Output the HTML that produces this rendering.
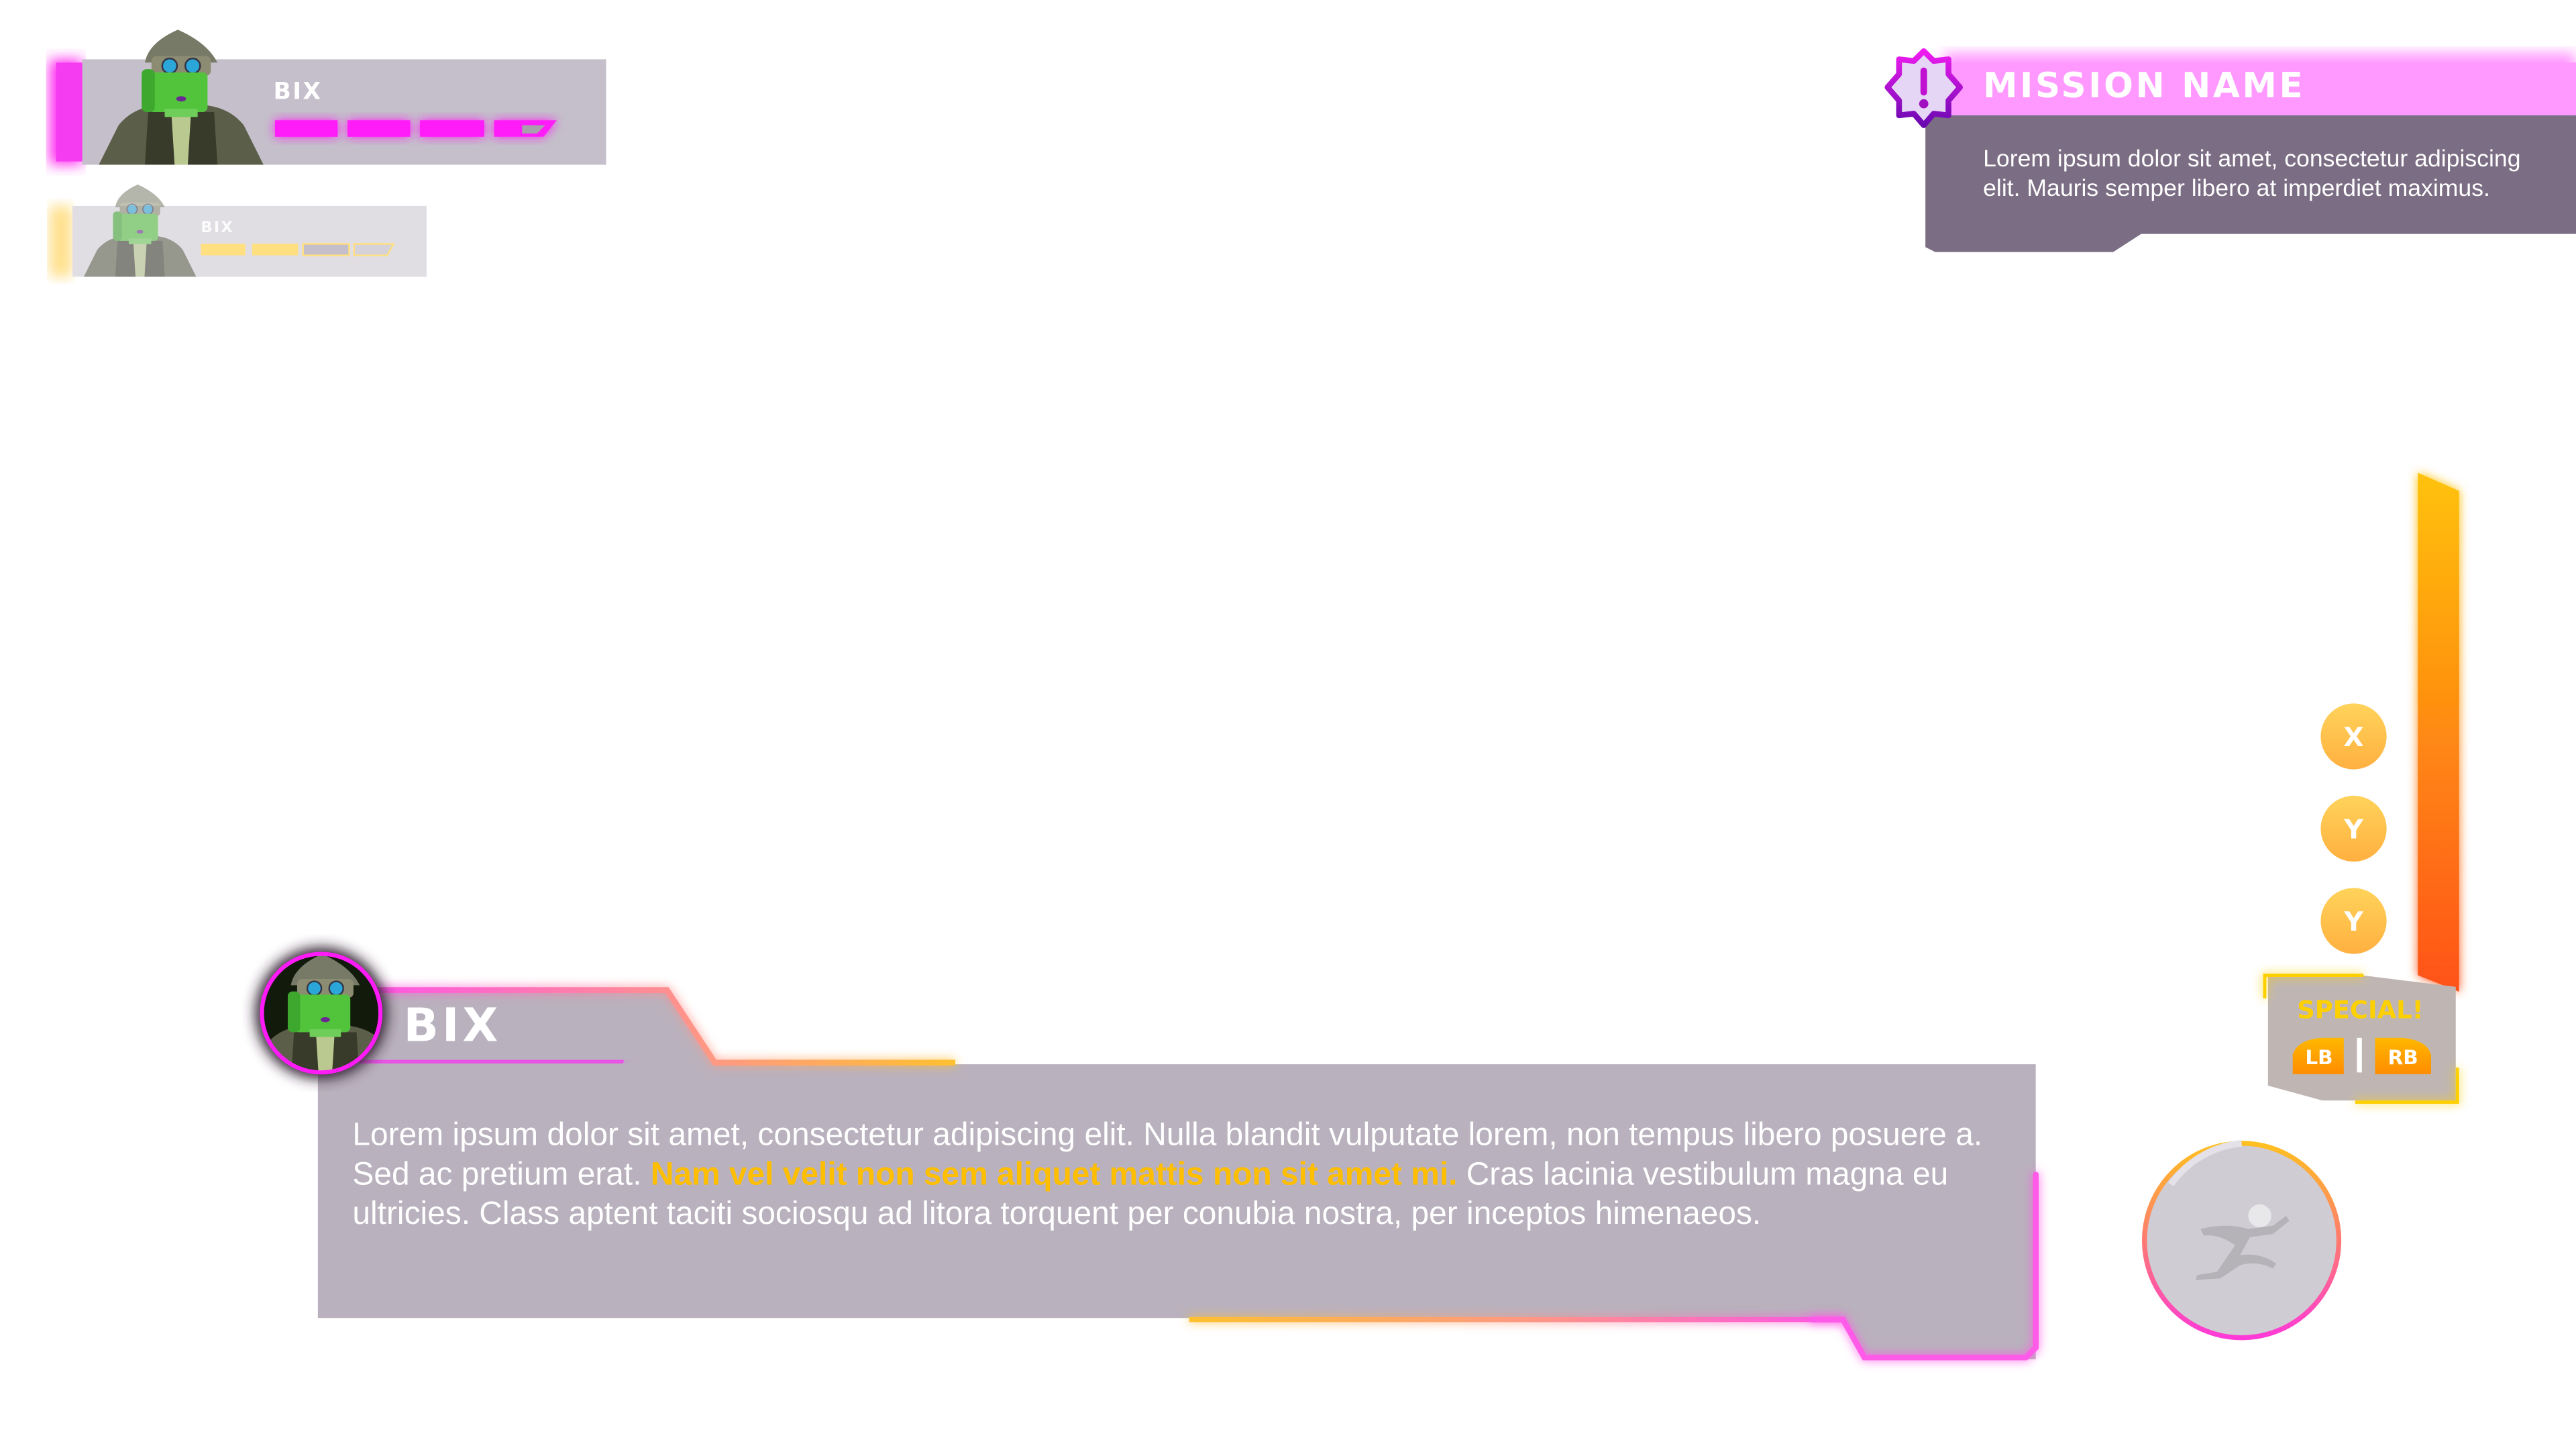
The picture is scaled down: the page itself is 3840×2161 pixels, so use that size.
<!DOCTYPE html>
<html><head><meta charset="utf-8"><style>
html,body{margin:0;padding:0;background:#fff;overflow:hidden}
#w{position:absolute;left:0;top:0;width:1564px;height:880px;transform:scale(2.45524);transform-origin:0 0;font-family:"Liberation Sans",sans-serif}
.t{position:absolute;white-space:nowrap}
.disp{font-family:"DejaVu Sans","Liberation Sans",sans-serif;font-weight:bold;color:#fff;letter-spacing:1px}
.body{font-family:"Liberation Sans",sans-serif;color:#fff}
</style></head><body><div id="w">
<svg width="1564" height="880" viewBox="0 0 1564 880" style="position:absolute;left:0;top:0">
<defs>
<filter id="gl" x="-50%" y="-50%" width="200%" height="200%"><feGaussianBlur stdDeviation="3" result="b"/><feMerge><feMergeNode in="b"/><feMergeNode in="SourceGraphic"/></feMerge></filter>
<filter id="gl2" filterUnits="userSpaceOnUse" x="700" y="780" width="450" height="40"><feGaussianBlur stdDeviation="3" result="b"/><feMerge><feMergeNode in="b"/><feMergeNode in="SourceGraphic"/></feMerge></filter>
<filter id="bl"><feGaussianBlur stdDeviation="4"/></filter>
<linearGradient id="tabg" x1="0" x2="1"><stop offset="0" stop-color="#ff55e6"/><stop offset="0.6" stop-color="#ff9a80"/><stop offset="1" stop-color="#ffc030"/></linearGradient>
<linearGradient id="botg" gradientUnits="userSpaceOnUse" x1="722" y1="0" x2="1118" y2="0"><stop offset="0" stop-color="#ffc030"/><stop offset="0.5" stop-color="#ff9a80"/><stop offset="1" stop-color="#ff55e6"/></linearGradient>
<linearGradient id="org" x1="0" y1="0" x2="0" y2="1"><stop offset="0" stop-color="#ffc20a"/><stop offset="1" stop-color="#ff521a"/></linearGradient>
<linearGradient id="btn" x1="0" y1="0" x2="0" y2="1"><stop offset="0" stop-color="#ffd35a"/><stop offset="1" stop-color="#ffb040"/></linearGradient>
<linearGradient id="pill" x1="0" y1="0" x2="0" y2="1"><stop offset="0" stop-color="#ffb800"/><stop offset="1" stop-color="#ff8c00"/></linearGradient>
<linearGradient id="mi" x1="0" y1="0" x2="0" y2="1"><stop offset="0" stop-color="#f01cf0"/><stop offset="1" stop-color="#6a08b0"/></linearGradient>
<linearGradient id="ring" x1="0" y1="0" x2="0" y2="1"><stop offset="0" stop-color="#ffc020"/><stop offset="0.5" stop-color="#ff7a70"/><stop offset="1" stop-color="#ff3ad8"/></linearGradient>
<clipPath id="av"><circle cx="195" cy="615" r="36"/></clipPath>
<symbol id="bix" viewBox="0 0 100 82">
<path d="M0 82 L12 58 Q20 48 34 46 L66 46 Q80 48 88 58 L100 82Z" fill="#5b5e48"/>
<path d="M28 82 L30 50 L70 50 L72 82Z" fill="#383b2a"/>
<path d="M44 50 L56 50 L54 82 L46 82Z" fill="#b9c98f"/>
<path d="M28 20 Q30 8 48 0 Q66 8 72 20Z" fill="#777a66"/>
<rect x="32" y="16" width="36" height="12" rx="3" fill="#8b8c72"/>
<circle cx="43" cy="22" r="4.5" fill="#2ba6d8" stroke="#334" stroke-width="1"/>
<circle cx="57" cy="22" r="4.5" fill="#2ba6d8" stroke="#334" stroke-width="1"/>
<rect x="30" y="26" width="36" height="24" rx="3" fill="#52c43c"/>
<rect x="26" y="24" width="8" height="26" rx="3" fill="#3ea82e"/>
<ellipse cx="50" cy="42" rx="3" ry="1.6" fill="#6a2890"/>
<rect x="40" y="48" width="20" height="5" fill="#6fce5a"/>
</symbol>
</defs>

<rect x="30" y="36" width="20" height="64" fill="#ff30f0" filter="url(#bl)"/>
<rect x="34" y="38" width="16" height="60" fill="#f53cf0"/>
<rect x="50" y="36" width="318" height="64" fill="#c4bfca"/>
<use href="#bix" x="60" y="18" width="100" height="82"/>
<g filter="url(#gl)" fill="#ff1af8">
<rect x="167" y="73" width="38" height="10"/><rect x="211" y="73" width="38" height="10"/><rect x="255" y="73" width="39" height="10"/>
<path d="M300 73 L338 73 L330 83 L300 83Z"/></g>
<path d="M317 76 L331 76 L326 81 L317 81Z" fill="#a7a0ac"/>

<rect x="30" y="125" width="14" height="43" fill="#ffe08c" filter="url(#bl)"/>
<rect x="44" y="125" width="215" height="43" fill="#e0dee3"/>
<use href="#bix" x="50" y="112" width="70" height="56" opacity="0.55"/>
<rect x="122" y="148" width="27" height="7" fill="#ffdf80"/><rect x="153" y="148" width="28" height="7" fill="#ffdf80"/>
<rect x="184" y="148" width="28" height="7" fill="#c4bfca" stroke="#ffdf80" stroke-width="1"/>
<path d="M215 148 L239 148 L235 155 L215 155Z" fill="#d5d2d9" stroke="#ffdf80" stroke-width="1"/>

<rect x="1180" y="32" width="384" height="38" fill="#ff99ff" filter="url(#bl)"/>
<rect x="1170" y="38" width="394" height="32" fill="#ff99ff"/>
<path d="M1169 70 L1564 70 L1564 142 L1300 142 L1283 153 L1175 153 L1169 150Z" fill="#7b6d83"/>
<path d="M1168 31 L1174 37 L1183 36 L1183 45 L1190 53 L1183 61 L1183 70 L1174 69 L1168 76 L1162 69 L1153 70 L1153 61 L1146 53 L1153 45 L1153 36 L1162 37Z" fill="#e6d6f5" stroke="url(#mi)" stroke-width="3.5" stroke-linejoin="round"/>
<rect x="1166" y="41" width="4" height="17" rx="2" fill="#c010d0"/><circle cx="1168" cy="63" r="2.8" fill="#a010c0"/>

<path d="M1468 287 L1493 298 L1493 602 L1468 592Z" fill="url(#org)" filter="url(#gl)"/>
<g fill="url(#btn)">
<circle cx="1429" cy="447" r="20"/><circle cx="1429" cy="503" r="20"/><circle cx="1429" cy="559" r="20"/></g>
<g fill="#fff"><text x="1429" y="453" font-family="DejaVu Sans" font-weight="bold" font-size="16" text-anchor="middle">X</text>
<text x="1429" y="509" font-family="DejaVu Sans" font-weight="bold" font-size="16" text-anchor="middle">Y</text>
<text x="1429" y="565" font-family="DejaVu Sans" font-weight="bold" font-size="16" text-anchor="middle">Y</text></g>
<path d="M1377 592 L1434 592 L1491 599 L1491 668 L1410 668 L1377 659Z" fill="#bfb6b3"/>
<path d="M1375 606 L1375 592 L1435 592" stroke="#ffd000" stroke-width="2" fill="none" filter="url(#gl)"/>
<path d="M1430 669 L1492 669 L1492 648" stroke="#ffd000" stroke-width="2" fill="none" filter="url(#gl)"/>
<text x="1433" y="618" font-family="DejaVu Sans" font-weight="bold" font-size="15" fill="#ffd000" text-anchor="middle">SPECIAL!</text>
<path d="M1392 652 L1392 640 Q1395 631 1410 630 L1423 630 L1423 652Z" fill="url(#pill)"/>
<path d="M1442 652 L1442 630 L1458 630 Q1473 631 1476 640 L1476 652Z" fill="url(#pill)"/>
<rect x="1431" y="630" width="3" height="21" fill="#fff"/>
<text x="1408" y="646" font-family="DejaVu Sans" font-weight="bold" font-size="12" fill="#fff" text-anchor="middle">LB</text>
<text x="1459" y="646" font-family="DejaVu Sans" font-weight="bold" font-size="12" fill="#fff" text-anchor="middle">RB</text>
<circle cx="1361" cy="753" r="59" fill="#cfccd3" stroke="url(#ring)" stroke-width="3"/>
<path d="M1318 719 A59 59 0 0 1 1361 694" stroke="#e4e2e8" stroke-width="4" fill="none"/>
<g fill="#b5b3b7"><circle cx="1372" cy="738" r="7" fill="#e8e8ea"/>
<path d="M1336 746 Q1352 742 1365 746 L1380 744 L1388 738 L1390 741 L1380 749 L1366 751 L1360 762 Q1372 760 1382 767 L1380 770 Q1370 765 1360 768 L1348 776 L1333 777 L1334 774 L1346 772 L1357 756 Q1348 749 1338 750Z"/></g>

<path d="M193 646 L193 600 L405 600 L435 646 L1236 646 L1236 825 L1133 825 L1120 800 L193 800Z" fill="#b9b1bd"/>
<path d="M225 601 L405 601 L434 645 L580 645" stroke="url(#tabg)" stroke-width="3.5" fill="none" filter="url(#gl)"/>
<path d="M220 645 L377 644" stroke="#e855e6" stroke-width="3.5" stroke-linecap="round" fill="none" filter="url(#gl)"/>
<path d="M193 657 L193 722" stroke="#f845ee" stroke-width="3.5" stroke-linecap="round" fill="none" filter="url(#gl)"/>
<path d="M722 801 L1119 801" stroke="url(#botg)" stroke-width="3" fill="none" filter="url(#gl2)"/>
<path d="M1100 801 L1119 801 L1132 824 L1230 824 L1236 818 L1236 713" stroke="#ff5ae8" stroke-width="3.5" stroke-linecap="round" fill="none" filter="url(#gl)"/>
<circle cx="195" cy="615" r="40" fill="#302030" filter="url(#bl)"/>
<circle cx="195" cy="615" r="36" fill="#121a0c"/>
<g clip-path="url(#av)"><use href="#bix" x="150" y="572" width="95" height="92"/></g>
<circle cx="195" cy="615" r="36" fill="none" stroke="#ff1af8" stroke-width="2.5"/>
</svg>

<div class="t disp" style="left:166px;top:48px;font-size:14px">BIX</div>
<div class="t disp" style="left:122px;top:134px;font-size:9px;opacity:.9">BIX</div>
<div class="t disp" style="left:1204px;top:40px;font-size:21px;letter-spacing:1.5px">MISSION NAME</div>
<div class="t body" style="left:1204px;top:89px;font-size:14.5px;line-height:17.5px">Lorem ipsum dolor sit amet, consectetur adipiscing<br>elit. Mauris semper libero at imperdiet maximus.</div>
<div class="t disp" style="left:245px;top:606px;font-size:28px;letter-spacing:2px">BIX</div>
<div class="t body" style="left:214px;top:677px;font-size:19.5px;line-height:24px">Lorem ipsum dolor sit amet, consectetur adipiscing elit. Nulla blandit vulputate lorem, non tempus libero posuere a.<br>Sed ac pretium erat. <b style="color:#ffbf00">Nam vel velit non sem aliquet mattis non sit amet mi.</b> Cras lacinia vestibulum magna eu<br>ultricies. Class aptent taciti sociosqu ad litora torquent per conubia nostra, per inceptos himenaeos.</div>
</div></body></html>
